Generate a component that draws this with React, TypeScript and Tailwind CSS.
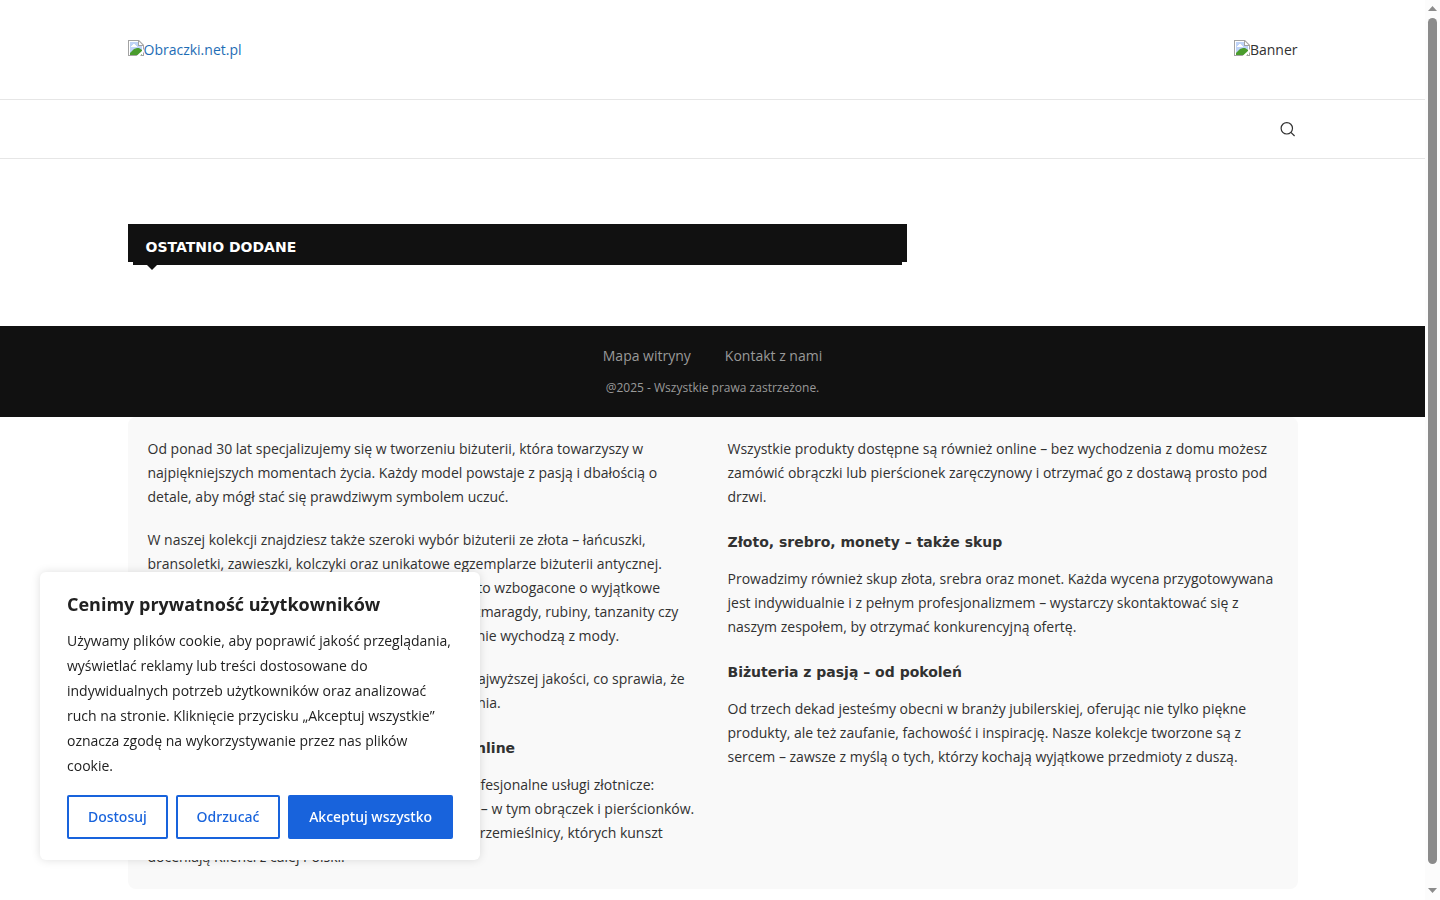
import type { ReactNode } from "react";

function BrokenImage() {
  return (
    <svg width="16" height="16" viewBox="0 0 16 16" className="block shrink-0" aria-hidden="true">
      <path d="M0 0H11L16 5V16H0Z" fill="#a3a3a3" />
      <path d="M1 1H10V6H15V15H1Z" fill="#fff" />
      <path d="M11 1.5V5H14.5Z" fill="#fff" />
      <path d="M2 2H10V6H14V14H2Z" fill="#bfd3f7" />
      <path d="M3 7V6H4V5H5V4H7V5H8V6H9V7Z" fill="#fff" />
      <path d="M2 15V13L4 11L6 9L9 8H11L14 10V15Z" fill="#4a9c2d" />
      <path d="M16 9V12L12 16H8.5Z" fill="#fff" />
    </svg>
  );
}

function Container({ children, className = "" }: { children: ReactNode; className?: string }) {
  return <div className={`mx-auto w-full max-w-[1170px] ${className}`}>{children}</div>;
}

function Header() {
  return (
    <header>
      <div className="border-b border-[#e6e6e6]">
        <Container className="flex items-start justify-between pt-10 pb-[39px]">
          <a href="#" className="flex h-5 text-[#1e6db5]">
            <BrokenImage />
            <span>Obraczki.net.pl</span>
          </a>
          <a href="#" className="flex h-5">
            <BrokenImage />
            <span>Banner</span>
          </a>
        </Container>
      </div>
      <nav className="border-b border-[#e6e6e6]">
        <Container className="flex h-[58px] items-center justify-end pr-[3px]">
          <button type="button" aria-label="Szukaj" className="block">
            <svg width="15" height="15" viewBox="0 0 15 15" fill="none" stroke="#313131" strokeWidth="1.2">
              <circle cx="6.8" cy="6.3" r="5.7" />
              <path d="M10.9 10.3L14.6 14" />
            </svg>
          </button>
        </Container>
      </nav>
    </header>
  );
}

function LatestHeading() {
  return (
    <div className="w-full max-w-[779px]">
      <h3 className="h-[38px] bg-[#111] pt-[13px] pl-[18px] font-['DejaVu_Sans',sans-serif] text-sm font-bold uppercase text-white">
        Ostatnio dodane
      </h3>
      <div className="mx-[5px] h-[3px] bg-[#111]" />
      <svg width="12" height="6" viewBox="0 0 12 6" className="ml-[18px] block">
        <path d="M1 0H11L6 5Z" fill="#111" />
      </svg>
    </div>
  );
}

function Footer() {
  return (
    <footer className="bg-[#111] pt-5 pb-[19px] text-center text-[#999]">
      <ul className="flex h-5 justify-center gap-[34px]">
        <li><a href="#">Mapa witryny</a></li>
        <li><a href="#">Kontakt z nami</a></li>
      </ul>
      <p className="mt-3 text-xs leading-5">@2025 - Wszystkie prawa zastrzeżone.</p>
    </footer>
  );
}

function SubHeading({ children }: { children: ReactNode }) {
  return <h3 className="mb-[15px] pt-1 font-['DejaVu_Sans',sans-serif] text-sm leading-5 font-bold">{children}</h3>;
}

function Paragraph({ children }: { children: ReactNode }) {
  return <p className="mb-[19px] leading-6 last:mb-0">{children}</p>;
}

function About() {
  return (
    <Container>
      <section className="grid grid-cols-2 gap-[30px] rounded-lg bg-[#f9f9f9] p-5">
        <div>
          <Paragraph>
            Od ponad 30 lat specjalizujemy się w tworzeniu biżuterii, która towarzyszy w najpiękniejszych
            momentach życia. Każdy model powstaje z pasją i dbałością o detale, aby mógł stać się prawdziwym
            symbolem uczuć.
          </Paragraph>
          <Paragraph>
            W naszej kolekcji znajdziesz także szeroki wybór biżuterii ze złota – łańcuszki, bransoletki,
            zawieszki, kolczyki oraz unikatowe egzemplarze biżuterii antycznej. Takie pierścionki zaręczynowe
            z brylantami są często wzbogacone o wyjątkowe kamienie szlachetne, takie jak brylanty, cyrkonie,
            szmaragdy, rubiny, tanzanity czy akwamaryny. To klasyczne połączenia, które nigdy nie wychodzą z
            mody.
          </Paragraph>
          <Paragraph>
            Każdy wyrób powstaje ze srebra oraz materiałów najwyższej jakości, co sprawia, że zachowuje swoje
            piękno i blask przez liczne pokolenia.
          </Paragraph>
          <SubHeading>Usługi jubilerskie – stacjonarnie a także online</SubHeading>
          <Paragraph>
            Nasza pracownia jubilerska oferuje od wielu lat profesjonalne usługi złotnicze: projektowanie i
            renowację biżuterii na zamówienie – w tym obrączek i pierścionków. W naszym zespole pracują
            doświadczeni jubilerzy i rzemieślnicy, których kunszt doceniają Klienci z całej Polski.
          </Paragraph>
        </div>
        <div>
          <Paragraph>
            Wszystkie produkty dostępne są również online – bez wychodzenia z domu możesz zamówić obrączki lub
            pierścionek zaręczynowy i otrzymać go z dostawą prosto pod drzwi.
          </Paragraph>
          <SubHeading>Złoto, srebro, monety – także skup</SubHeading>
          <Paragraph>
            Prowadzimy również skup złota, srebra oraz monet. Każda wycena przygotowywana jest indywidualnie i z
            pełnym profesjonalizmem – wystarczy skontaktować się z naszym zespołem, by otrzymać konkurencyjną
            ofertę.
          </Paragraph>
          <SubHeading>Biżuteria z pasją – od pokoleń</SubHeading>
          <Paragraph>
            Od trzech dekad jesteśmy obecni w branży jubilerskiej, oferując nie tylko piękne produkty, ale też
            zaufanie, fachowość i inspirację. Nasze kolekcje tworzone są z sercem – zawsze z myślą o tych, którzy
            kochają wyjątkowe przedmioty z duszą.
          </Paragraph>
        </div>
      </section>
    </Container>
  );
}

function CookieNotice() {
  return (
    <div
      role="dialog"
      aria-labelledby="cookie-title"
      className="fixed bottom-10 left-10 w-[440px] rounded-md bg-white px-[27px] pt-[19px] pb-[21px] text-[#212121] shadow-[0_0_10px_rgba(0,0,0,0.13)]"
    >
      <h2 id="cookie-title" className="text-lg leading-[26px] font-bold">Cenimy prywatność użytkowników</h2>
      <p className="mt-[11px] leading-[25px]">
        Używamy plików cookie, aby poprawić jakość przeglądania, wyświetlać reklamy lub treści dostosowane do
        indywidualnych potrzeb użytkowników oraz analizować ruch na stronie. Kliknięcie przycisku „Akceptuj
        wszystkie” oznacza zgodę na wykorzystywanie przez nas plików cookie.
      </p>
      <div className="mt-[17px] flex gap-2 font-['Noto_Sans',sans-serif] font-medium">
        <button type="button" className="h-11 grow rounded-xs border-2 border-[#1863dc] text-[#1863dc]">Dostosuj</button>
        <button type="button" className="h-11 grow rounded-xs border-2 border-[#1863dc] text-[#1863dc]">Odrzucać</button>
        <button type="button" className="h-11 grow rounded-xs border-2 border-[#1863dc] bg-[#1863dc] text-white">
          Akceptuj wszystko
        </button>
      </div>
    </div>
  );
}

function ScrollBar() {
  return (
    <div className="fixed inset-y-0 right-0 flex w-[15px] flex-col items-center bg-[#fcfcfc]" aria-hidden="true">
      <svg width="15" height="18" viewBox="0 0 15 18" className="block">
        <path d="M3 11L7.5 6L12 11Z" fill="#8b8b8b" />
      </svg>
      <div className="w-[9px] grow rounded-full bg-[#8b8b8b]" />
      <svg width="15" height="36" viewBox="0 0 15 36" className="block">
        <path d="M3 24L7.5 29L12 24Z" fill="#8b8b8b" />
      </svg>
    </div>
  );
}

export default function App() {
  return (
    <div className="min-h-screen bg-white pr-[15px] font-['Open_Sans',sans-serif] text-sm text-[#313131]">
      <Header />
      <main className="pt-[65px] pb-[55px]">
        <Container>
          <LatestHeading />
        </Container>
      </main>
      <Footer />
      <About />
      <CookieNotice />
      <ScrollBar />
    </div>
  );
}
